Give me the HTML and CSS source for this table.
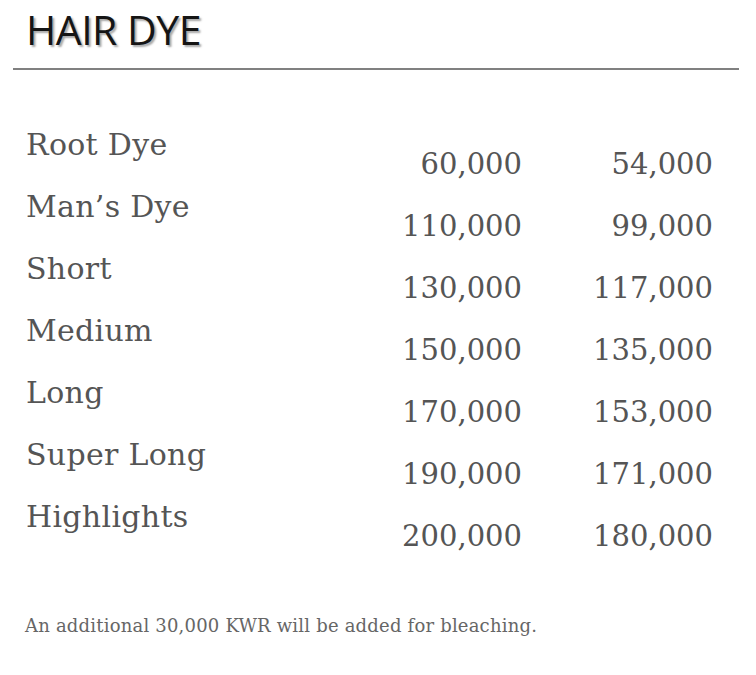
FILE: index.html
```html
<!DOCTYPE html>
<html>
<head>
<meta charset="utf-8">
<link rel="stylesheet" href="styles.css">
</head>
<body>
<div class="page">
  <header class="header">
    <h1 class="title">HAIR DYE</h1>
  </header>
  <div class="rule"></div>
  <div class="menu">
    <div class="item">Root Dye</div><div class="price">60,000</div><div class="price">54,000</div>
    <div class="item">Man’s Dye</div><div class="price">110,000</div><div class="price">99,000</div>
    <div class="item">Short</div><div class="price">130,000</div><div class="price">117,000</div>
    <div class="item">Medium</div><div class="price">150,000</div><div class="price">135,000</div>
    <div class="item">Long</div><div class="price">170,000</div><div class="price">153,000</div>
    <div class="item">Super Long</div><div class="price">190,000</div><div class="price">171,000</div>
    <div class="item">Highlights</div><div class="price">200,000</div><div class="price">180,000</div>
  </div>
  <p class="note">An additional 30,000 KWR will be added for bleaching.</p>
</div>
</body>
</html>
```
FILE: styles.css
```css
html, body {
  margin: 0;
  padding: 0;
  background: #ffffff;
}
.page {
  width: 756px;
  height: 675px;
  box-sizing: border-box;
  padding: 0 17px 0 13px;
}
.header {
  padding: 0 0 0 13px;
}
.title {
  margin: 0;
  padding-top: 4px;
  height: 62px;
  box-sizing: border-box;
  font-family: "Open Sans", sans-serif;
  font-weight: 400;
  font-size: 41px;
  line-height: 50px;
  letter-spacing: -0.5px;
  color: #151515;
  text-shadow: 2px 2px 2px rgba(0, 0, 0, 0.35);
}
.rule {
  height: 2px;
  background: #808080;
  margin-top: 6px;
}
.menu {
  display: grid;
  grid-template-columns: 1fr 164px 191px;
  grid-auto-rows: 62px;
  margin-top: 55px;
  padding-left: 13px;
  margin-right: 26px;
  font-family: "DejaVu Serif", serif;
  color: #555555;
}
.item {
  font-size: 30px;
  line-height: 40px;
  letter-spacing: 0.3px;
}
.price {
  font-size: 29px;
  line-height: 40px;
  text-align: right;
  padding-top: 19px;
}
.note {
  margin: 56px 0 0 12px;
  font-family: "DejaVu Serif", serif;
  font-size: 18px;
  letter-spacing: 0.2px;
  color: #666666;
}
```
